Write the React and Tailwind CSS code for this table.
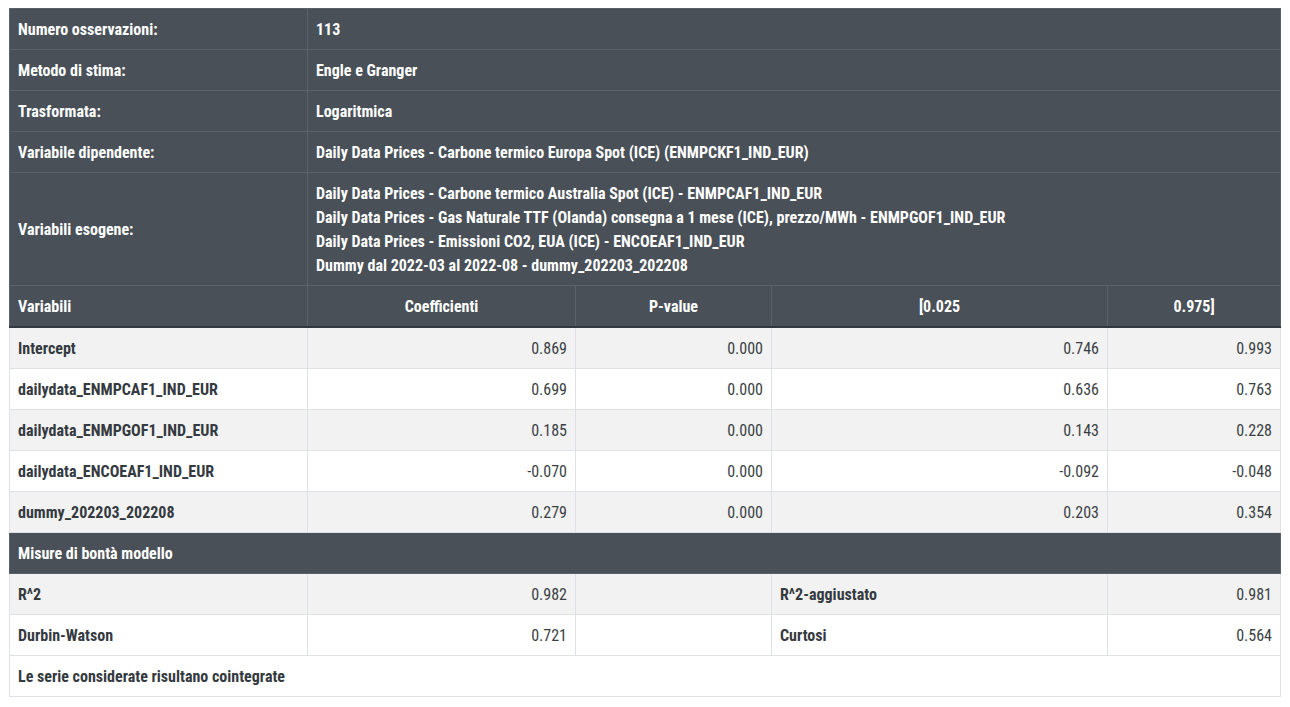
import React from "react";

const info = [
  ["Numero osservazioni:", "113"],
  ["Metodo di stima:", "Engle e Granger"],
  ["Trasformata:", "Logaritmica"],
  ["Variabile dipendente:", "Daily Data Prices - Carbone termico Europa Spot (ICE) (ENMPCKF1_IND_EUR)"],
];

const exog = [
  "Daily Data Prices - Carbone termico Australia Spot (ICE) - ENMPCAF1_IND_EUR",
  "Daily Data Prices - Gas Naturale TTF (Olanda) consegna a 1 mese (ICE), prezzo/MWh - ENMPGOF1_IND_EUR",
  "Daily Data Prices - Emissioni CO2, EUA (ICE) - ENCOEAF1_IND_EUR",
  "Dummy dal 2022-03 al 2022-08 - dummy_202203_202208",
];

const coefs = [
  ["Intercept", "0.869", "0.000", "0.746", "0.993"],
  ["dailydata_ENMPCAF1_IND_EUR", "0.699", "0.000", "0.636", "0.763"],
  ["dailydata_ENMPGOF1_IND_EUR", "0.185", "0.000", "0.143", "0.228"],
  ["dailydata_ENCOEAF1_IND_EUR", "-0.070", "0.000", "-0.092", "-0.048"],
  ["dummy_202203_202208", "0.279", "0.000", "0.203", "0.354"],
];

const darkTh = "border border-[#5b6168] px-2 pt-[9px] pb-[7px] text-white font-bold align-middle";
const cell = "border border-[#dee2e6] px-2 pt-[9px] pb-[7px] align-middle";

export default function App() {
  return (
    <div
      className="px-[9px] pt-[8px] pb-2 text-[16px] leading-6 text-[#343a40] [font-stretch:condensed]"
      style={{ fontFamily: '"Roboto Condensed", Roboto, "Liberation Sans", sans-serif' }}
    >
      <table className="w-full border-collapse table-fixed">
        <colgroup>
          <col className="w-[298px]" />
          <col className="w-[268px]" />
          <col className="w-[196px]" />
          <col className="w-[336px]" />
          <col />
        </colgroup>
        <tbody className="bg-[#495057]">
          {info.map(([k, v]) => (
            <tr key={k}>
              <th className={`${darkTh} text-left`}>{k}</th>
              <td colSpan={4} className={`${darkTh} text-left`}>{v}</td>
            </tr>
          ))}
          <tr>
            <th className={`${darkTh} text-left`}>Variabili esogene:</th>
            <td colSpan={4} className={`${darkTh} text-left`}>
              {exog.map((e) => (
                <div key={e}>{e}</div>
              ))}
            </td>
          </tr>
          <tr className="border-b-2 border-b-[#32383e]">
            <th className={`${darkTh} text-left`}>Variabili</th>
            <th className={`${darkTh} text-center`}>Coefficienti</th>
            <th className={`${darkTh} text-center`}>P-value</th>
            <th className={`${darkTh} text-center`}>[0.025</th>
            <th className={`${darkTh} text-center`}>0.975]</th>
          </tr>
        </tbody>
        <tbody>
          {coefs.map((r, i) => (
            <tr key={r[0]} className={i % 2 === 0 ? "bg-[#f2f2f2]" : "bg-white"}>
              <th className={`${cell} text-left font-bold`}>{r[0]}</th>
              {r.slice(1).map((v, j) => (
                <td key={j} className={`${cell} text-right font-normal text-[#3a3f44]`}>{v}</td>
              ))}
            </tr>
          ))}
          <tr className="bg-[#495057]">
            <th colSpan={5} className={`${darkTh} text-left`}>Misure di bontà modello</th>
          </tr>
          <tr className="bg-[#f2f2f2]">
            <th className={`${cell} text-left font-bold`}>R^2</th>
            <td className={`${cell} text-right text-[#3a3f44]`}>0.982</td>
            <td className={cell}></td>
            <th className={`${cell} text-left font-bold`}>R^2-aggiustato</th>
            <td className={`${cell} text-right text-[#3a3f44]`}>0.981</td>
          </tr>
          <tr className="bg-white">
            <th className={`${cell} text-left font-bold`}>Durbin-Watson</th>
            <td className={`${cell} text-right text-[#3a3f44]`}>0.721</td>
            <td className={cell}></td>
            <th className={`${cell} text-left font-bold`}>Curtosi</th>
            <td className={`${cell} text-right text-[#3a3f44]`}>0.564</td>
          </tr>
          <tr className="bg-white">
            <th colSpan={5} className={`${cell} text-left font-bold`}>Le serie considerate risultano cointegrate</th>
          </tr>
        </tbody>
      </table>
    </div>
  );
}
